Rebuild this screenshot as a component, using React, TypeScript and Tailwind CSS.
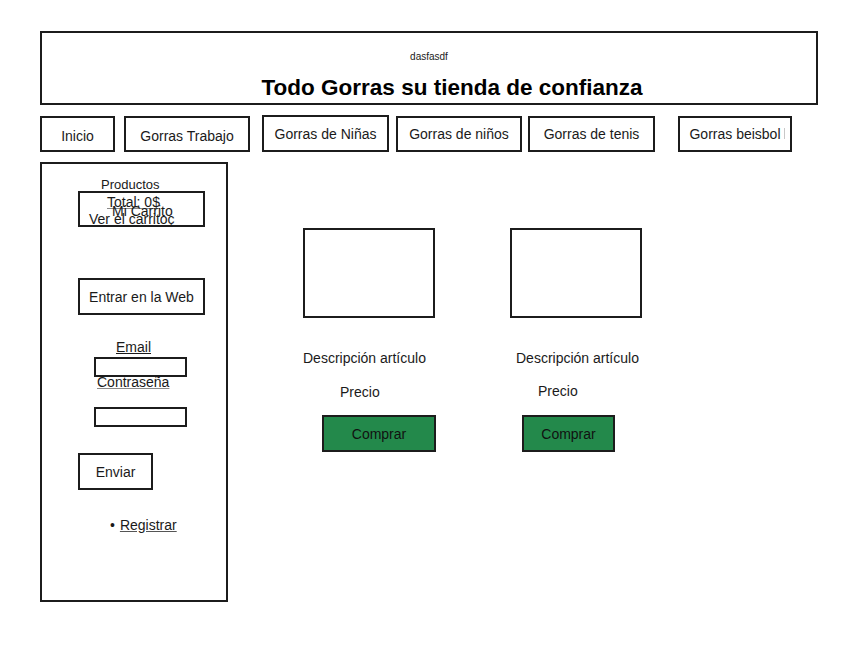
import React from "react";

const font = { fontFamily: '"Liberation Sans", Arial, sans-serif' };

function NavBtn({ label, w, ml, low }: { label: string; w: string; ml: string; low?: boolean }) {
  return (
    <div
      className={`${w} ${ml} h-[36px] border-2 border-[#1c1c1c] flex items-center justify-center text-[14px] leading-[16px] text-[#1a1a1a] ${low ? "pt-[4px]" : ""}`}
    >
      {label}
    </div>
  );
}

export default function App() {
  return (
    <div className="w-[851px] h-[649px] bg-white overflow-hidden text-[#1a1a1a]" style={font}>
      <div className="pt-[31px] pl-[40px] flex flex-col items-start">
        {/* Header */}
        <div className="w-[778px] h-[74px] border-2 border-[#1c1c1c] flex flex-col items-center pt-[18px]">
          <div className="text-[10px] leading-[12px]">dasfasdf</div>
          <div className="mt-[12px] ml-[46px] text-[22.5px] leading-[26px] font-bold text-black">
            Todo Gorras su tienda de confianza
          </div>
        </div>

        {/* Nav */}
        <div className="mt-[11px] flex items-start">
          <NavBtn label="Inicio" w="w-[75px]" ml="ml-0" low />
          <NavBtn label="Gorras Trabajo" w="w-[126px]" ml="ml-[9px]" low />
          <div className="ml-[12px] w-[127px] h-[37px] -mt-[1px] border-2 border-[#1c1c1c] flex items-center justify-center text-[14px] leading-[16px]">
            Gorras de Niñas
          </div>
          <NavBtn label="Gorras de niños" w="w-[126px]" ml="ml-[7px]" />
          <NavBtn label="Gorras de tenis" w="w-[127px]" ml="ml-[6px]" />
          <div className="relative ml-[23px] w-[114px] h-[36px] border-2 border-[#1c1c1c] flex items-center justify-center text-[14px] leading-[16px]">
            Gorras beisbol
            <span className="absolute left-[104px] top-[10px] w-px h-[11px] bg-[#c8c8c8]" />
          </div>
        </div>

        {/* Main */}
        <div className="mt-[10px] flex items-start">
          {/* Sidebar */}
          <div className="w-[188px] h-[440px] border-2 border-[#1c1c1c] flex flex-col items-start">
            <div className="mt-[14px] ml-[59px] text-[13px] leading-[13px]">Productos</div>
            <div className="relative ml-[36px] w-[127px] h-[36px] border-2 border-[#1c1c1c] text-[14px] leading-[16px]">
              <span className="absolute left-[27px] top-[1px] whitespace-nowrap underline decoration-[#8a8a8a] underline-offset-[1px]">
                Total: 0$
              </span>
              <span className="absolute left-[32px] top-[10px] whitespace-nowrap">Mi Carrito</span>
              <span className="absolute left-[9px] top-[18px] whitespace-nowrap">Ver el carritoç</span>
            </div>
            <div className="mt-[51px] ml-[36px] w-[127px] h-[37px] border-2 border-[#1c1c1c] flex items-center justify-center text-[14px] leading-[16px]">
              Entrar en la Web
            </div>
            <div className="mt-[24px] ml-[74px] text-[14px] leading-[16px] underline underline-offset-[1px]">Email</div>
            <div className="mt-[2px] ml-[52px] w-[93px] h-[20px] border-2 border-[#1c1c1c]" />
            <div className="-mt-[3px] ml-[55px] text-[14px] leading-[16px] underline decoration-[#8a8a8a] underline-offset-[1px]">
              Contraseña
            </div>
            <div className="mt-[17px] ml-[52px] w-[93px] h-[20px] border-2 border-[#1c1c1c]" />
            <div className="mt-[26px] ml-[36px] w-[75px] h-[37px] border-2 border-[#1c1c1c] flex items-center justify-center text-[14px] leading-[16px]">
              Enviar
            </div>
            <div className="mt-[27px] ml-[68px] flex text-[14px] leading-[16px]">
              <span>•</span>
              <span className="ml-[5px] underline decoration-[#555] underline-offset-[1px]">Registrar</span>
            </div>
          </div>

          {/* Product 1 */}
          <div className="ml-[75px] w-[132px] flex flex-col items-start">
            <div className="mt-[66px] w-[132px] h-[90px] border-2 border-[#1c1c1c]" />
            <div className="mt-[32px] whitespace-nowrap text-[14px] leading-[16px]">Descripción artículo</div>
            <div className="mt-[18px] ml-[37px] text-[14px] leading-[16px]">Precio</div>
            <div className="mt-[15px] ml-[19px] w-[114px] h-[37px] shrink-0 border-2 border-[#1c1c1c] bg-[#23894b] flex items-center justify-center text-[14px] leading-[16px] text-[#111]">
              Comprar
            </div>
          </div>

          {/* Product 2 */}
          <div className="ml-[75px] w-[132px] flex flex-col items-start">
            <div className="mt-[66px] w-[132px] h-[90px] border-2 border-[#1c1c1c]" />
            <div className="mt-[32px] ml-[6px] whitespace-nowrap text-[14px] leading-[16px]">Descripción artículo</div>
            <div className="mt-[17px] ml-[28px] text-[14px] leading-[16px]">Precio</div>
            <div className="mt-[16px] ml-[12px] w-[93px] h-[37px] shrink-0 border-2 border-[#1c1c1c] bg-[#23894b] flex items-center justify-center text-[14px] leading-[16px] text-[#111]">
              Comprar
            </div>
          </div>
        </div>
      </div>
    </div>
  );
}
